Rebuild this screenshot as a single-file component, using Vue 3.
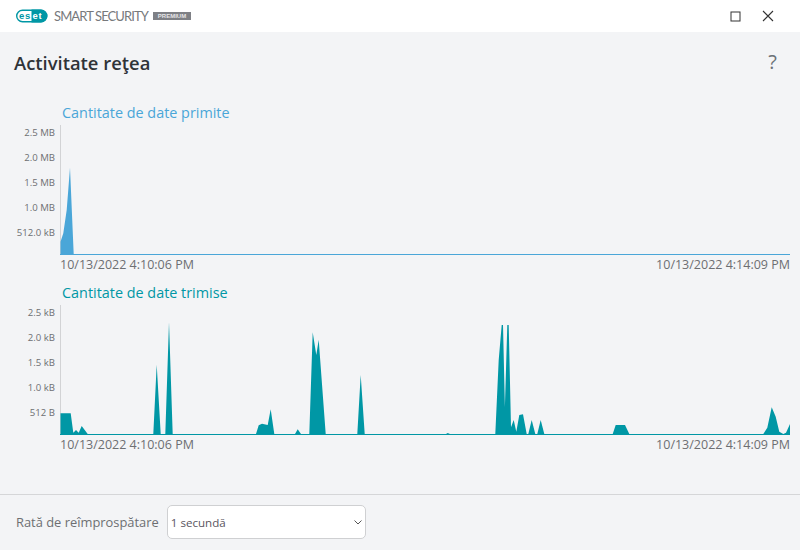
<script setup>
const received = [[60.5,254],[60.5,241.7],[63.3,233.3],[66.7,210],[70,167.7],[73.7,254]]
const sent = [
  [60.5,434],[60.5,413.3],[70.7,413.3],[73.3,432.7],[76,430],[78.7,432.7],[81.7,426],[87.7,434],
  [153.3,434],[156.7,364.7],[160.7,434],[165.3,434],[169,322.3],[172.7,434],
  [256,434],[258.7,425.3],[262,423.7],[267.7,425],[270.7,409.3],[274.3,434],
  [295,434],[297.7,429.3],[301,434],
  [309.3,434],[312.7,332.3],[316.3,355],[318.7,339.7],[325.7,434],
  [357.3,434],[360.7,375],[364.7,434],
  [446,434],[447.7,433],[450,434],
  [495.3,434],[498.7,360],[501.7,325],[503,325],[504.9,407],[507.3,325],[508.7,325],[511,427.3],[513.7,420],[516.3,431.7],[519.3,415],[523,414.3],[526.7,434],
  [528.3,434],[531.7,420],[535.3,434],[537.3,434],[540.7,420],[544.3,434],
  [612.7,434],[615.7,425],[625,425],[629.3,434],
  [763.3,434],[767.3,427.7],[771.7,407.3],[775.7,416.7],[779.3,431.7],[783.3,434],[786,432.7],[790,424],[790,434]
]
const toPoints = (pts, top) => pts.map(([x, y]) => `${x - 60},${y - top}`).join(' ')
const charts = [
  { title: 'Cantitate de date primite', cls: 'blue', labels: ['2.5 MB','2.0 MB','1.5 MB','1.0 MB','512.0 kB'], points: toPoints(received, 125) },
  { title: 'Cantitate de date trimise', cls: 'teal', labels: ['2.5 kB','2.0 kB','1.5 kB','1.0 kB','512 B'], points: toPoints(sent, 305) }
]
</script>

<template>
  <div class="window">
    <header class="titlebar">
      <div class="brand">
        <svg class="logo" width="32" height="14" viewBox="0 0 32 14">
          <rect x="0.7" y="1.2" width="30" height="11.6" rx="5.8" fill="#fff" stroke="#0097a5" stroke-width="1.4"/>
          <path d="M15.5 .5 H25 A6.5 6.5 0 0 1 25 13.5 H15.5 Z" fill="#0097a5"/>
          <text x="3" y="10" class="logo-a">es</text>
          <text x="16.6" y="10" class="logo-b">et</text>
        </svg>
        <span class="product">SMART SECURITY</span>
        <span class="tier">PREMIUM</span>
      </div>
      <div class="controls">
        <svg width="11" height="11" viewBox="0 0 11 11"><rect x="1" y="1" width="9" height="9" fill="none" stroke="#333" stroke-width="1"/></svg>
        <svg width="12" height="12" viewBox="0 0 12 12"><path d="M1 1 L11 11 M11 1 L1 11" stroke="#333" stroke-width="1.1" fill="none"/></svg>
      </div>
    </header>

    <main class="content">
      <div class="heading">
        <h1>Activitate reţea</h1>
        <span class="help">?</span>
      </div>

      <section v-for="c in charts" :key="c.title" class="chart" :class="c.cls">
        <h2>{{ c.title }}</h2>
        <div class="plot">
          <div class="axis">
            <span v-for="l in c.labels" :key="l">{{ l }}</span>
          </div>
          <svg class="graph" width="730" height="130" viewBox="0 0 730 130">
            <rect x="0" y="0" width="1" height="130" class="yline"/>
            <polygon :points="c.points" class="area"/>
            <rect x="0" y="129" width="730" height="1" class="area"/>
          </svg>
        </div>
        <div class="times">
          <span>10/13/2022 4:10:06 PM</span>
          <span>10/13/2022 4:14:09 PM</span>
        </div>
      </section>
    </main>

    <footer class="footer">
      <label for="rate">Rată de reîmprospătare</label>
      <div class="select-box">
        <select id="rate">
          <option>1 secundă</option>
        </select>
        <svg class="chev" width="8" height="5" viewBox="0 0 8 5"><path d="M.5 .5 L4 4 L7.5 .5" fill="none" stroke="#555" stroke-width="1"/></svg>
      </div>
    </footer>
  </div>
</template>

<style>
html, body { margin: 0; background: #f3f4f6; }
</style>

<style scoped>
.window {
  width: 800px;
  height: 550px;
  display: flex;
  flex-direction: column;
  background: #f3f4f6;
  font-family: "Open Sans", "Noto Sans", sans-serif;
  overflow: hidden;
}
.titlebar {
  height: 32px;
  flex: none;
  background: #fff;
  display: flex;
  align-items: center;
  justify-content: space-between;
  padding: 0 26px 0 16px;
}
.brand { display: flex; align-items: center; }
.logo { display: block; }
.logo-a, .logo-b {
  font-family: "Liberation Sans", sans-serif;
  font-size: 9.5px;
  font-weight: 700;
  letter-spacing: 0.6px;
}
.logo-a { fill: #0097a5; }
.logo-b { fill: #fff; }
.product {
  margin-left: 6px;
  width: 93px;
  font-family: "Lato", sans-serif;
  font-size: 13px;
  letter-spacing: -0.9px;
  color: #77797c;
  white-space: nowrap;
}
.tier {
  margin-left: 6px;
  width: 38px;
  height: 8px;
  background: #7e8085;
  color: #e6e6e8;
  font-family: "Liberation Sans", sans-serif;
  font-size: 6px;
  font-weight: 700;
  line-height: 8px;
  text-align: center;
}
.controls { display: flex; align-items: center; gap: 21px; }
.controls svg { display: block; }
.content { flex: 1; min-height: 0; }
.heading {
  display: flex;
  justify-content: space-between;
  align-items: center;
  height: 30px;
  margin-top: 15px;
  padding: 0 23px 0 14px;
}
h1 {
  margin: 0;
  font-size: 18.4px;
  font-weight: 600;
  color: #2f3338;
}
.help { font-size: 20px; color: #6b7177; line-height: 30px; }
.chart:first-of-type { margin-top: 25px; }
h2 {
  margin: 0 0 0 62px;
  font-size: 14.4px;
  font-weight: 400;
  line-height: 21px;
  height: 23px;
}
.blue h2 { color: #4aa6d8; }
.teal h2 { color: #0097a5; }
.blue .area { fill: #4aa6d8; }
.teal .area { fill: #0097a5; }
.yline { fill: #d2d3d5; }
.plot { display: flex; }
.axis {
  width: 55px;
  height: 130px;
  margin-right: 5px;
  display: flex;
  flex-direction: column;
  align-items: flex-end;
  gap: 10px;
  font-size: 9.6px;
  line-height: 15px;
  color: #6d6f72;
}
.graph { display: block; }
.times {
  display: flex;
  justify-content: space-between;
  width: 730px;
  margin-left: 60px;
  height: 27px;
  box-sizing: border-box;
  font-size: 12.5px;
  line-height: 20px;
  color: #6d6f72;
}
.footer {
  flex: none;
  height: 56px;
  box-sizing: border-box;
  border-top: 1px solid #d5d6d8;
  display: flex;
  align-items: center;
  padding: 0 0 1px 16px;
  gap: 8px;
  font-size: 12.9px;
  color: #6d6f72;
}
.select-box { position: relative; }
select {
  display: block;
  width: 199px;
  height: 34px;
  appearance: none;
  background: #fff;
  border: 1px solid #cfd0d2;
  border-radius: 5px;
  padding: 0 0 0 3px;
  font-family: inherit;
  font-size: 11.6px;
  color: #5a5560;
  outline: none;
}
.chev { position: absolute; right: 4px; top: 15px; }
</style>
